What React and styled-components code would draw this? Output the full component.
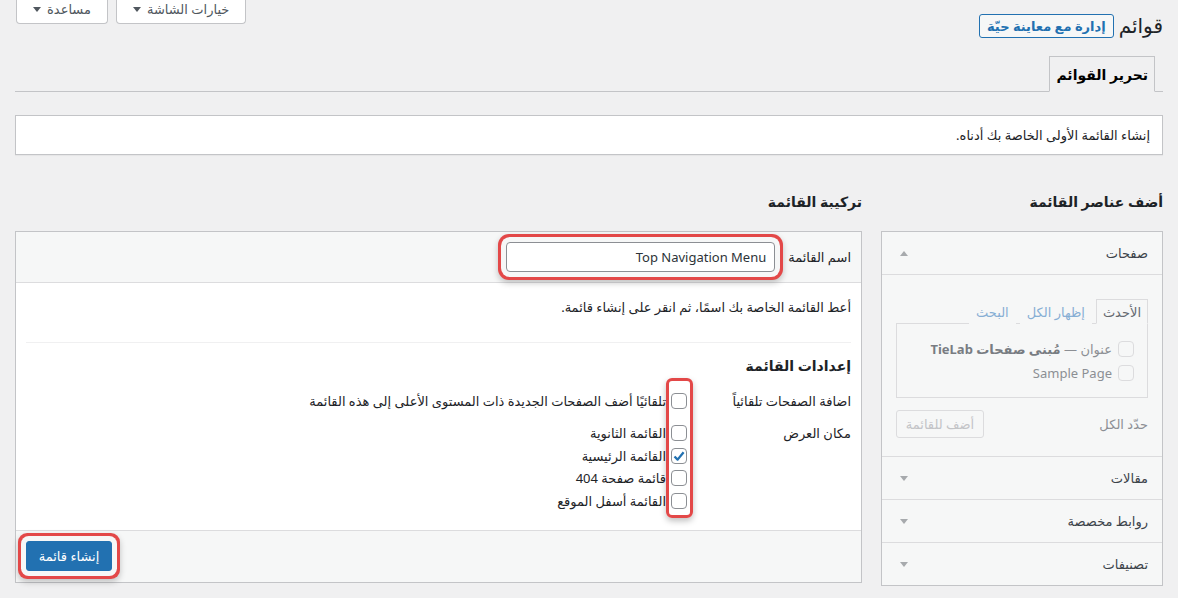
import styled, { createGlobalStyle } from "styled-components";

const GlobalStyle = createGlobalStyle`
  html, body {
    margin: 0;
    padding: 0;
    background: #f0f0f1;
  }
  body {
    font-family: Tahoma, "Noto Sans", "DejaVu Sans", sans-serif;
    font-size: 13px;
    color: #1d2327;
    overflow: hidden;
  }
  * {
    box-sizing: border-box;
  }
`;

const Page = styled.div`
  direction: rtl;
  padding: 0 15px;
  height: 598px;
`;

const TopBar = styled.div`
  display: flex;
  align-items: flex-start;
  justify-content: space-between;
`;

const TitleGroup = styled.div`
  display: flex;
  align-items: center;
  gap: 5px;
  margin-top: 14px;
`;

const Title = styled.h1`
  margin: 0;
  font-size: 20px;
  font-weight: 400;
  line-height: 24px;
  color: #1d2327;
`;

const LiveButton = styled.a`
  display: inline-flex;
  align-items: center;
  height: 24px;
  padding: 0 7px;
  border: 1px solid #2271b1;
  border-radius: 3px;
  background: #f6f7f7;
  color: #2271b1;
  font-size: 13px;
  font-weight: 600;
  text-decoration: none;
`;

const MetaLinks = styled.div`
  display: flex;
  gap: 8px;
  margin-left: 1px;
`;

const MetaButton = styled.button`
  display: flex;
  align-items: center;
  gap: 6px;
  height: 24px;
  padding: 0 16px 5px;
  border: 1px solid #c3c4c7;
  border-top: none;
  border-radius: 0 0 4px 4px;
  background: #fff;
  color: #50575e;
  font: inherit;
  font-size: 13px;
`;

const Caret = styled.span`
  display: inline-block;
  width: 0;
  height: 0;
  border-left: 4px solid transparent;
  border-right: 4px solid transparent;
  border-top: ${(p) => (p.up ? "none" : `5px solid ${p.color || "#50575e"}`)};
  border-bottom: ${(p) => (p.up ? `5px solid ${p.color || "#50575e"}` : "none")};
`;

const NavTabs = styled.div`
  display: flex;
  margin-top: 18px;
  padding-right: 8px;
  border-bottom: 1px solid #c3c4c7;
`;

const NavTab = styled.a`
  display: flex;
  align-items: center;
  height: 36px;
  margin-bottom: -1px;
  padding: 0 6px;
  border: 1px solid #c3c4c7;
  border-bottom-color: #f0f0f1;
  background: #f0f0f1;
  color: #000;
  font-size: 14px;
  font-weight: 600;
`;

const Notice = styled.div`
  display: flex;
  align-items: center;
  height: 40px;
  margin-top: 23px;
  padding: 0 12px;
  border: 1px solid #c3c4c7;
  background: #fff;
  box-shadow: 0 1px 1px rgba(0, 0, 0, 0.04);
`;

const Columns = styled.div`
  display: grid;
  grid-template-columns: 282px 1fr;
  gap: 19px;
  margin-top: 37px;
  align-items: start;
`;

const Column = styled.div`
  display: flex;
  flex-direction: column;
`;

const Heading = styled.h2`
  margin: 0 0 19px;
  font-size: 14px;
  font-weight: 600;
  line-height: 20px;
  color: #1d2327;
`;

/* menu editor */

const EditorBox = styled.div`
  border: 1px solid #c3c4c7;
  background: #fff;
`;

const EditorHeader = styled.div`
  display: flex;
  align-items: center;
  gap: 13px;
  height: 51px;
  padding: 0 10px;
  background: #f6f7f7;
  border-bottom: 1px solid #dcdcde;
`;

const highlight = `
  box-shadow: 0 0 0 5px #f6f7f7, 0 0 0 8px #e34848, 0 3px 6px 8px rgba(0, 0, 0, 0.22);
`;

const NameInput = styled.input`
  width: 269px;
  height: 30px;
  padding: 0 8px;
  border: 1px solid #8c8f94;
  border-radius: 4px;
  background: #fff;
  color: #2c3338;
  font-family: "Noto Sans", "DejaVu Sans", sans-serif;
  font-size: 13px;
  direction: rtl;
  ${highlight}
`;

const EditorBody = styled.div`
  padding: 14px 10px 18px;
`;

const Hint = styled.p`
  margin: 0;
  line-height: 20px;
`;

const Divider = styled.hr`
  margin: 25px 0 13px;
  border: none;
  border-top: 1px solid #f0f0f1;
`;

const SubHeading = styled.h3`
  margin: 0 0 14px;
  font-size: 14px;
  font-weight: 600;
  line-height: 20px;
`;

const Settings = styled.div`
  position: relative;
  display: grid;
  grid-template-columns: 164px 1fr;
  row-gap: 10px;
`;

const SettingLabel = styled.div`
  line-height: 22px;
`;

const Options = styled.div`
  display: flex;
  flex-direction: column;
`;

const Option = styled.label`
  display: flex;
  align-items: center;
  gap: 5px;
  height: ${(p) => (p.tall ? "22px" : "22.5px")};
`;

const Box = styled.span`
  display: inline-flex;
  align-items: center;
  justify-content: center;
  flex: none;
  width: 16px;
  height: 16px;
  border: 1px solid ${(p) => (p.faded ? "#dcdcde" : "#8c8f94")};
  border-radius: 4px;
  background: ${(p) => (p.faded ? "#f6f7f7" : "#fff")};
`;

const ColumnMark = styled.div`
  position: absolute;
  top: -12px;
  right: 158px;
  width: 27px;
  height: 140px;
  border: 3px solid #e34848;
  border-radius: 6px;
  box-shadow: 0 3px 6px rgba(0, 0, 0, 0.25);
  pointer-events: none;
`;

const EditorFooter = styled.div`
  display: flex;
  justify-content: flex-end;
  height: 52px;
  padding: 10px 10px 0;
  background: #f6f7f7;
  border-top: 1px solid #dcdcde;
`;

const PrimaryButton = styled.button`
  height: 30px;
  width: 86px;
  padding: 0 8px;
  border: 1px solid #2271b1;
  border-radius: 3px;
  background: #2271b1;
  color: #fff;
  font: inherit;
  font-size: 13px;
  ${highlight}
`;

/* sidebar accordion */

const Accordion = styled.div`
  border: 1px solid #c3c4c7;
  background: #f6f7f7;
`;

const Section = styled.div`
  border-top: ${(p) => (p.first ? "none" : "1px solid #dcdcde")};
`;

const SectionTitle = styled.div`
  display: flex;
  align-items: center;
  justify-content: space-between;
  height: 42px;
  padding: 0 14px 0 18px;
  color: #3c434a;
  font-size: 13px;
`;

const SectionBody = styled.div`
  padding: 24px 14px 18px;
  border-top: 1px solid #dcdcde;
`;

const PanelTabs = styled.div`
  display: flex;
  align-items: flex-end;
  gap: 4px;
`;

const PanelTab = styled.span`
  display: flex;
  align-items: center;
  height: 25px;
  padding: 0 6px;
  margin-bottom: -1px;
  border: 1px solid ${(p) => (p.active ? "#dcdcde" : "transparent")};
  border-bottom-color: ${(p) => (p.active ? "#f6f7f7" : "transparent")};
  color: ${(p) => (p.active ? "#646970" : "#86aed4")};
  background: #f6f7f7;
`;

const TabPanel = styled.div`
  padding: 13px 13px 12px;
  border: 1px solid #dcdcde;
`;

const PageItem = styled.div`
  display: flex;
  align-items: center;
  gap: 6px;
  height: 24px;
  color: #8c8f94;
`;

const Strong = styled.strong`
  color: #787c82;
  font-weight: 700;
`;

const SelectRow = styled.div`
  display: flex;
  align-items: center;
  justify-content: space-between;
  margin-top: 12px;
  color: #8c8f94;
`;

const GhostButton = styled.button`
  width: 88px;
  height: 28px;
  border: 1px solid #dcdcde;
  border-radius: 3px;
  background: #f6f7f7;
  color: #c3c4c7;
  font: inherit;
  font-size: 13px;
`;

const Check = () => (
  <svg width="14" height="14" viewBox="0 0 14 14">
    <polyline
      points="2.5,7.5 5.6,10.6 11.6,3.2"
      fill="none"
      stroke="#2271b1"
      strokeWidth="2.3"
      strokeLinejoin="round"
    />
  </svg>
);

const Checkbox = ({ checked, faded }) => (
  <Box faded={faded}>{checked && <Check />}</Box>
);

const locations = [
  { label: "القائمة الثانوية" },
  { label: "القائمة الرئيسية", checked: true },
  { label: "قائمة صفحة 404" },
  { label: "القائمة أسفل الموقع" },
];

const closedSections = ["مقالات", "روابط مخصصة", "تصنيفات"];

export default function App() {
  return (
    <Page>
      <GlobalStyle />
      <TopBar>
        <TitleGroup>
          <Title>قوائم</Title>
          <LiveButton>إدارة مع معاينة حيّة</LiveButton>
        </TitleGroup>
        <MetaLinks>
          <MetaButton>
            خيارات الشاشة <Caret />
          </MetaButton>
          <MetaButton>
            مساعدة <Caret />
          </MetaButton>
        </MetaLinks>
      </TopBar>

      <NavTabs>
        <NavTab>تحرير القوائم</NavTab>
      </NavTabs>

      <Notice>إنشاء القائمة الأولى الخاصة بك أدناه.</Notice>

      <Columns>
        <Column>
          <Heading>أضف عناصر القائمة</Heading>
          <Accordion>
            <Section first>
              <SectionTitle>
                صفحات
                <Caret up color="#a7aaad" />
              </SectionTitle>
              <SectionBody>
                <PanelTabs>
                  <PanelTab active>الأحدث</PanelTab>
                  <PanelTab>إظهار الكل</PanelTab>
                  <PanelTab>البحث</PanelTab>
                </PanelTabs>
                <TabPanel>
                  <PageItem>
                    <Checkbox faded />
                    <span>
                      عنوان — <Strong>مُبنى صفحات TieLab</Strong>
                    </span>
                  </PageItem>
                  <PageItem>
                    <Checkbox faded />
                    Sample Page
                  </PageItem>
                </TabPanel>
                <SelectRow>
                  حدّد الكل
                  <GhostButton>أضف للقائمة</GhostButton>
                </SelectRow>
              </SectionBody>
            </Section>
            {closedSections.map((name) => (
              <Section key={name}>
                <SectionTitle>
                  {name}
                  <Caret color="#a7aaad" />
                </SectionTitle>
              </Section>
            ))}
          </Accordion>
        </Column>

        <Column>
          <Heading>تركيبة القائمة</Heading>
          <EditorBox>
            <EditorHeader>
              <span>اسم القائمة</span>
              <NameInput defaultValue="Top Navigation Menu" />
            </EditorHeader>
            <EditorBody>
              <Hint>أعط القائمة الخاصة بك اسمًا، ثم انقر على إنشاء قائمة.</Hint>
              <Divider />
              <SubHeading>إعدادات القائمة</SubHeading>
              <Settings>
                <SettingLabel>اضافة الصفحات تلقائياً</SettingLabel>
                <Options>
                  <Option tall>
                    <Checkbox />
                    تلقائيًا أضف الصفحات الجديدة ذات المستوى الأعلى إلى هذه القائمة
                  </Option>
                </Options>
                <SettingLabel>مكان العرض</SettingLabel>
                <Options>
                  {locations.map((loc) => (
                    <Option key={loc.label}>
                      <Checkbox checked={loc.checked} />
                      {loc.label}
                    </Option>
                  ))}
                </Options>
                <ColumnMark />
              </Settings>
            </EditorBody>
            <EditorFooter>
              <PrimaryButton>إنشاء قائمة</PrimaryButton>
            </EditorFooter>
          </EditorBox>
        </Column>
      </Columns>
    </Page>
  );
}
